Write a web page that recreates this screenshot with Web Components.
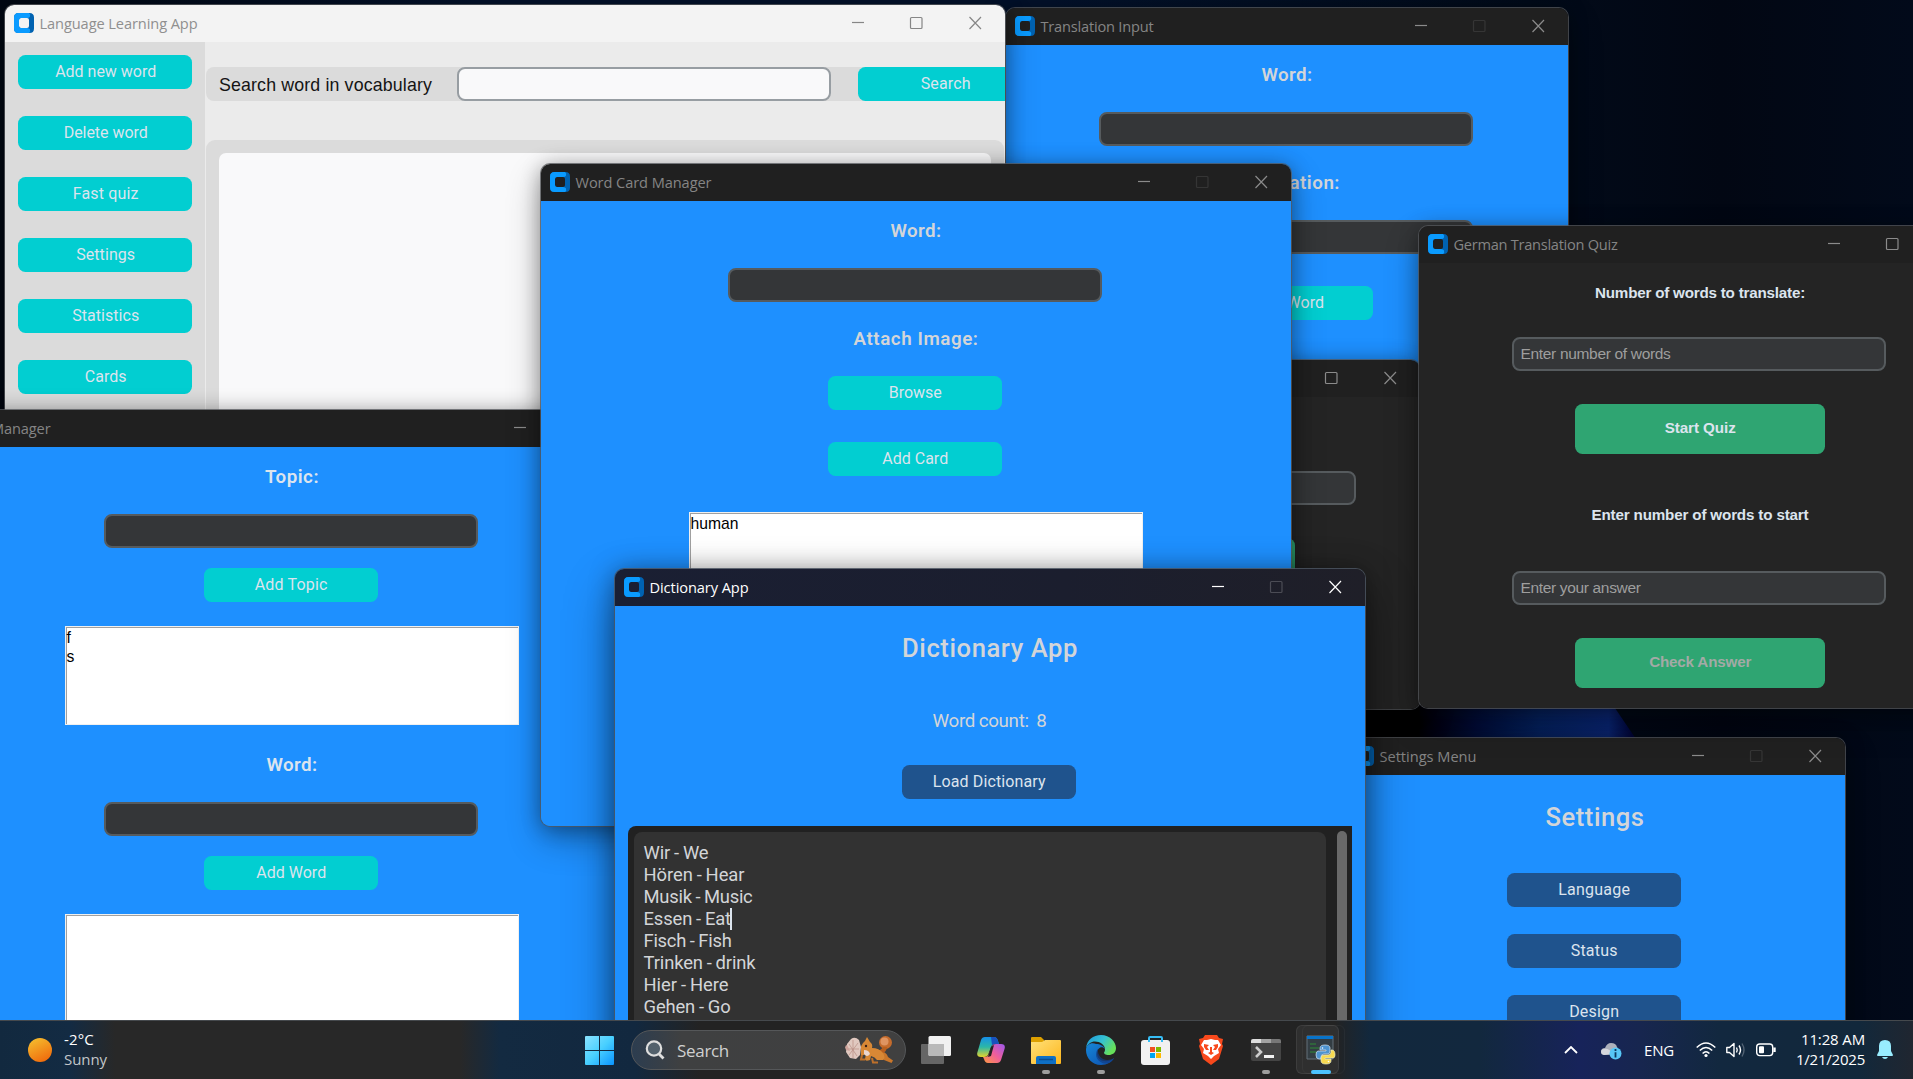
<!DOCTYPE html>
<html lang="en">
<head>
<meta charset="utf-8">
<title>Desktop</title>
<style>
html,body{margin:0;height:100%;overflow:hidden;background:#020814}
body{font-family:Roboto,"Liberation Sans",sans-serif}
</style>
</head>
<body>
<desk-top>
  <app-window caption="Translation Input" tw="112" nomax style="left:1006px;top:8px;width:562px;height:500px;--body:#1e90ff">
    <ui-label w="50" style="margin-top:18px">Word:</ui-label>
    <ui-entry style="margin-top:25px"></ui-entry>
    <ui-label w="105" style="margin-top:25px">Translation:</ui-label>
    <ui-entry style="margin-top:25px"></ui-entry>
    <ui-button style="margin-top:32px" w="75">Save Word</ui-button>
  </app-window>

  <app-window caption="" style="left:920px;top:360px;width:500px;height:349px;--body:#242424">
    <ui-entry style="margin-top:74px"></ui-entry>
    <ui-button big style="margin-top:33px"></ui-button>
  </app-window>

  <app-window caption="Settings Menu" tw="96" nomax style="left:1345px;top:738px;width:500px;height:400px;--body:#1e90ff">
    <ui-label head w="98" style="margin-top:26px">Settings</ui-label>
    <ui-button navy w="71" style="margin-top:40px">Language</ui-button>
    <ui-button navy w="46" style="margin-top:27px">Status</ui-button>
    <ui-button navy w="49" style="margin-top:27px">Design</ui-button>
  </app-window>

  <app-window caption="German Translation Quiz" tw="163" style="left:1419px;top:226px;width:562px;height:482px;--body:#242424">
    <ui-label arial w="209" style="margin-top:20px">Number of words to translate:</ui-label>
    <ui-entry w="149" style="margin-top:34px">Enter number of words</ui-entry>
    <ui-button big w="70" style="margin-top:33px">Start Quiz</ui-button>
    <ui-label arial w="216" style="margin-top:51px">Enter number of words to start</ui-label>
    <ui-entry w="119" style="margin-top:46px">Enter your answer</ui-entry>
    <ui-button big off w="101" style="margin-top:33px">Check Answer</ui-button>
  </app-window>

  <app-window caption="Language Learning App" tw="157" light style="left:5px;top:5px;width:1000px;height:600px;--body:#ebebeb">
    <vocabulary-view></vocabulary-view>
  </app-window>

  <app-window caption="Topic Manager" tw="98" style="left:-83px;top:410px;width:750px;height:660px;--body:#1e90ff">
    <ui-label bright w="53" style="margin-top:18px">Topic:</ui-label>
    <ui-entry style="margin-top:25px"></ui-entry>
    <ui-button w="72" style="margin-top:20px">Add Topic</ui-button>
    <list-box style="margin-top:24px;height:99px"><div>f</div><div>s</div></list-box>
    <ui-label bright w="50" style="margin-top:28px">Word:</ui-label>
    <ui-entry style="margin-top:25px"></ui-entry>
    <ui-button w="69" style="margin-top:20px">Add Word</ui-button>
    <list-box style="margin-top:24px;height:130px"></list-box>
  </app-window>

  <app-window caption="Word Card Manager" tw="135" nomax style="left:541px;top:164px;width:750px;height:662px;--body:#1e90ff">
    <ui-label w="50" style="margin-top:18px">Word:</ui-label>
    <ui-entry style="margin-top:25px"></ui-entry>
    <ui-label w="124" style="margin-top:25px">Attach Image:</ui-label>
    <ui-button w="52" style="margin-top:25px">Browse</ui-button>
    <ui-button w="65" style="margin-top:32px">Add Card</ui-button>
    <list-box style="margin-top:36px;height:99px"><div>human</div></list-box>
  </app-window>

  <app-window caption="Dictionary App" tw="98" nomax active style="left:615px;top:569px;width:750px;height:530px;--body:#1e90ff">
    <ui-label head w="175" style="margin-top:26px">Dictionary App</ui-label>
    <ui-label plain w="113" style="margin-top:45px">Word count:&nbsp; 8</ui-label>
    <ui-button navy w="112" style="margin-top:32px">Load Dictionary</ui-button>
    <text-panel style="margin-top:27px"></text-panel>
  </app-window>

  <task-bar></task-bar>
</desk-top>

<script>
const make = (tag, html, init) => customElements.define(tag, class extends HTMLElement {
  connectedCallback() {
    if (this.shadowRoot) return;
    const t = document.createElement('template');
    t.innerHTML = typeof html === 'function' ? html(this) : html;
    this.attachShadow({mode: 'open'}).append(t.content.cloneNode(true));
    if (init) init(this);
  }
});

make('desk-top', `<style>
:host{display:block;position:relative;width:100vw;height:100vh;overflow:hidden;
background:linear-gradient(90deg,#020813 0,#04122c 25%,#04122c 55%,#020b1a 80%,#020713 90%,#020a1a 100%)}
.bloom{position:absolute;left:1365px;top:690px;width:290px;height:60px;
background:linear-gradient(90deg,#000004 0 18%,#020d38 38%,#06225f 60%,#0b2673 84%,#03063a 92%);clip-path:polygon(0 0,82% 0,96% 100%,0 100%)}
</style><div class="bloom"></div><slot></slot>`);

make('app-logo', `<style>:host{display:block;width:20px;height:20px}svg{display:block}</style>
<svg width="20" height="20" viewBox="0 0 20 20"><path d="M4.500 0H15.500Q20 0 20 4.500V15.500Q20 20 15.500 20H4.500Q0 20 0 15.500V4.500Q0 0 4.500 0ZM7 5Q5 5 5 7V13Q5 15 7 15H13Q15 15 15 13V7Q15 5 13 5Z" fill="#0062b1" fill-rule="evenodd"/>
<path d="M4.500 0H15Q16.800 1 16 3.500Q15.500 5 13 5H7Q5 5 5 7V13Q5 15 7 15H13Q15.500 15 16 16.500Q16.800 19 15 20H4.500Q0 20 0 15.500V4.500Q0 0 4.500 0Z" fill="#0a9bff"/></svg>`);

make('app-window', h => `<style>
:host{position:absolute;display:flex;flex-direction:column;border-radius:9px;box-sizing:border-box;
box-shadow:0 0 0 1px rgba(85,88,92,.75),0 2px 20px rgba(0,0,0,.32),0 14px 34px rgba(0,0,0,.3);--bar:#202020;--ink:#858585;--btn:#8b8b8b}
:host([light]){--bar:#f3f3f3;--ink:#8f8f8f;--btn:#868686}
:host([active]){--bar:linear-gradient(90deg,#1a1f33,#1b1e2e 60%,#1f1f28);--ink:#fff;--btn:#fff;box-shadow:0 0 0 1px rgba(75,85,98,.85),0 2px 26px rgba(0,0,0,.4),0 22px 50px rgba(0,0,0,.42)}
.bar{height:37px;flex:none;display:flex;align-items:center;background:var(--bar);color:var(--ink);padding:0 0 1px 9px;box-sizing:border-box;border-radius:9px 9px 0 0}
fit-text{margin-left:5.500px;font:14.6px/34px "Open Sans","Noto Sans",sans-serif;padding-bottom:1px}
.ctl{margin-left:auto;display:flex;padding-right:1px}
.ctl svg{width:58px;height:37px;display:block;fill:none;stroke:var(--btn);stroke-width:1.2}
.ctl .dim{opacity:.2}
.body{flex:1;min-height:0;overflow:hidden;display:flex;flex-direction:column;align-items:center;background:var(--body);border-radius:0 0 9px 9px;box-sizing:border-box;padding-right:1px}
:host([light]) .body{display:block;padding:0}
</style>
<div class="bar"><app-logo></app-logo>${h.getAttribute('caption') ? `<fit-text w="${h.getAttribute('tw')}">${h.getAttribute('caption')}</fit-text>` : ''}
<div class="ctl"><svg viewBox="0 0 58 37"><path d="M22 17.500H34"/></svg>
<svg ${h.hasAttribute('nomax') ? 'class="dim"' : ''} viewBox="0 0 58 37"><rect x="22.500" y="12.500" width="11.500" height="11" rx="1"/></svg>
<svg viewBox="0 0 58 37"><path d="M23.500 12L35 24M35 12L23.500 24"/></svg></div></div>
<div class="body"><slot></slot></div>`);

make('ui-label', h => `<style>
:host{display:block;flex:none;height:24px;margin-left:1px;font:600 18.750px/25px Roboto,sans-serif;color:#d3d5d8}
:host([bright]){color:#dce4ee}
:host([head]){height:32px;font-size:25.600px;line-height:32px;font-weight:500;margin-left:1px}
:host([plain]){font-weight:400;line-height:24px;word-spacing:-.5px;margin-left:0}
:host([arial]){height:20px;font:700 15.200px/20px "Liberation Sans",sans-serif;color:#dce4ee}
</style><fit-text w="${h.getAttribute('w')}"><slot></slot></fit-text>`);

make('ui-entry', h => `<style>
:host{display:block;flex:none;box-sizing:border-box;width:374px;height:34px;border:2px solid #565b5e;border-radius:8px;background:#343638;
color:#9e9e9e;font:15.5px/29px "Liberation Sans",sans-serif;padding-left:7px;margin-right:2px}
:host([light]){background:#f9f9fa;border-color:#979da2;margin-right:0}
</style>${h.hasAttribute('w') ? `<fit-text w="${h.getAttribute('w')}"><slot></slot></fit-text>` : ''}`);

make('ui-button', h => `<style>
:host{display:flex;justify-content:center;flex:none;width:174px;height:34px;border-radius:7.500px;background:#02ced1;color:#dce4ee;font:16px/33px Roboto,sans-serif;margin-right:2px}
fit-text{position:relative;left:.7px}
:host([navy]){background:#1f538d}
:host([big]){width:250px;height:50px;margin-right:0;background:#2fa572;font:700 15.200px/48px "Liberation Sans",sans-serif}
:host([off]){color:#a3aaa6}
</style>${h.hasAttribute('w') ? `<fit-text w="${h.getAttribute('w')}"><slot></slot></fit-text>` : ''}`);

make('list-box', `<style>
:host{display:block;flex:none;width:454px;box-sizing:border-box;background:#fff;border:1px solid #f0f0f0;box-shadow:inset 1px 1px 0 #a0a0a0;
color:#000;font:15.700px/19px "Liberation Sans",sans-serif;padding:1px 1px}
</style><slot></slot>`);

make('vocabulary-view', `<style>
:host{display:flex;height:100%;overflow:hidden}
.side{width:200px;flex:none;background:#dbdbdb;display:flex;flex-direction:column;align-items:flex-start;gap:27px;padding:13px 0 0 13px;box-sizing:border-box}
.main{flex:1;min-width:0;padding:25px 0 0 1px;overflow:hidden}
.row{display:flex;align-items:center;width:860px;height:34px;background:#dbdbdb;border-radius:8px;padding-left:13px;box-sizing:border-box;color:#141414;font:17.800px/34px "Liberation Sans",sans-serif}
.row fit-text{padding-top:2px}
.row ui-entry{margin-left:25px}.row ui-button{margin-left:27px}
.panel{width:798px;height:440px;margin-top:39px;background:#dbdbdb;border-radius:9px;padding:13px;box-sizing:border-box}
.page{height:100%;border-radius:7px;background:#f9f9fa}
</style>
<div class="side"><ui-button w="100">Add new word</ui-button><ui-button w="83">Delete word</ui-button><ui-button w="65">Fast quiz</ui-button><ui-button w="58">Settings</ui-button><ui-button w="66">Statistics</ui-button><ui-button w="41">Cards</ui-button></div>
<div class="main"><div class="row"><fit-text w="212">Search word in vocabulary</fit-text><ui-entry light></ui-entry><ui-button w="49">Search</ui-button></div>
<div class="panel"><div class="page"></div></div></div>`);

make('text-panel', `<style>
:host{display:flex;flex:none;box-sizing:border-box;width:724px;height:300px;background:#212121;border-radius:8px 0 0 0;padding:6px 5px 0 6px}
.page{width:692px;flex:none;background:#323232;border-radius:8px;padding:10px 0 0 10px;box-sizing:border-box;color:#d3d5d8;font:18.400px/22px Roboto,sans-serif;word-spacing:-.6px}
.page div{display:flex;height:22px}
.caret{width:2px;height:22px;background:#dce4ee;margin-left:-1px}
.bar{width:10px;margin:-1px 0 0 auto;border-radius:5px;background:#696969}
</style><div class="page"><div><fit-text w="64">Wir - We</fit-text></div><div><fit-text w="100">Hören - Hear</fit-text></div><div><fit-text w="108">Musik - Music</fit-text></div><div><fit-text w="86.500">Essen - Eat</fit-text><span class="caret"></span></div><div><fit-text w="87">Fisch - Fish</fit-text></div><div><fit-text w="111">Trinken - drink</fit-text></div><div><fit-text w="84">Hier - Here</fit-text></div><div><fit-text w="86">Gehen - Go</fit-text></div></div><div class="bar"></div>`);

make('task-bar', `<style>
:host{position:absolute;left:0;right:0;bottom:0;height:59px;box-sizing:border-box;border-top:1px solid #45494d;display:flex;align-items:center;color:#fff;
font:15px/20px "Open Sans","Noto Sans",sans-serif;
background:linear-gradient(90deg,#12293f 0,#132b43 70px,#282828 115px,#282828 460px,#132a41 500px,#12283f 635px,#232323 700px,#232323 1335px,#12283d 1370px,#12283e 1480px,#17235a 1580px,#17264f 1640px,#12283f 1720px,#12283b 1860px,#202630 1913px)}
svg{display:block;flex:none}
.weather{display:flex;align-items:center;width:585px;flex:none;padding-left:28px;box-sizing:border-box;gap:12px}
.weather>div{padding-bottom:2px}
.weather span{color:#c3c6c9}
.search{margin-left:17px;width:275px;height:40px;flex:none;box-sizing:border-box;border-radius:20px;border:1px solid #555759;background:linear-gradient(90deg,#2c3d50,#3f4041 18%,#404040);display:flex;align-items:center;padding:0 12px 0 13px}
.search fit-text{margin-left:12px;padding-top:1px;color:#d0d0d0;font-size:17px}
.search .pet{margin-left:auto}
.apps{display:flex;margin-left:2px;align-self:stretch}
.app{width:55px;height:58px;flex:none;position:relative;display:flex;align-items:center;justify-content:center}
.run::after{content:"";position:absolute;left:24px;bottom:5px;width:8px;height:4px;border-radius:2px;background:#9d9d9d}
.on::before,.on i{content:"";position:absolute;left:3px;top:4px;width:43px;height:49px;border-radius:6px;background:rgba(255,255,255,.06);border:1px solid rgba(255,255,255,.07);box-sizing:border-box}
.on i{left:9px;width:43px;background:none;border-color:rgba(255,255,255,.04)}
.on::after{left:18px;width:20px;background:#4cc2ff}
.on svg{position:relative}
.tray{display:flex;align-items:center;margin-left:auto;padding-right:20px}
.clock{display:flex;flex-direction:column;align-items:flex-end;padding-bottom:2px}
</style>
<div class="weather"><svg width="24" height="24"><defs><linearGradient id="sun" x1=".2" y1="0" x2=".7" y2="1"><stop stop-color="#f5bd2e"/><stop offset="1" stop-color="#f06a0c"/></linearGradient></defs><circle cx="12" cy="12" r="12" fill="url(#sun)"/></svg>
<div><fit-text w="29">-2°C</fit-text><span><fit-text w="42">Sunny</fit-text></span></div></div>
<svg width="29" height="29"><defs><linearGradient id="st" x1="0" y1="0" x2="1" y2="1"><stop stop-color="#8be3ff"/><stop offset=".5" stop-color="#48cfff"/><stop offset="1" stop-color="#0a94ff"/></linearGradient></defs><path d="M0 1Q0 0 1 0H14V14H0ZM15 0H28Q29 0 29 1V14H15ZM0 15H14V29H1Q0 29 0 28ZM15 15H29V28Q29 29 28 29H15Z" fill="url(#st)"/></svg>
<div class="search"><svg width="20" height="20" fill="none" stroke="#dedede" stroke-width="2.200"><circle cx="9" cy="8.500" r="7.200" fill="#53616c"/><path d="M14 14L18.500 18.500" stroke-width="2.800"/></svg><fit-text w="51">Search</fit-text>
<svg class="pet" width="48" height="28" viewBox="0 0 48 28">
<path d="M31 15C37 14 42 17 43 21L48 24.500L46.500 27L39 24L33 20Z" fill="#c9762a"/><ellipse cx="40.500" cy="6.500" rx="6.500" ry="6.500" fill="#c46b2c"/><ellipse cx="39.500" cy="5.500" rx="4" ry="4" fill="#df9461"/><path d="M38 11Q36 14.500 32 14.500L36 18Q42 16 42 11Z" fill="#b95f1d"/>
<path d="M20 5L22 1L25 6Q28 8 27 12Q34 12 38 17Q41 22 38 24L32 24Q30 21 26 20L25 24Q20 26 20 23L21 18L16 20V15Q15 9 20 5Z" fill="#d88835"/><path d="M19 14Q24 14 25 18Q22 22 19 18Z" fill="#ead6cf"/><path d="M27 22L28 26.500H33M17 19L16 23.500H20" stroke="#bd702b" stroke-width="2" fill="none"/><circle cx="21" cy="10" r="1.200" fill="#3b2014"/>
<path d="M6 3Q10 0 14 4L16 11L15 19L11 23L5 22L1 16L2 8Z" fill="#e0c8bf"/><path d="M8 4L8 22M4 8L12 20M13 7L4 19M2 13H14" stroke="#b78c83" stroke-width=".7"/><path d="M2 9Q-1 10 1 14L5 15Z" fill="#cda29a"/></svg></div>
<div class="apps">
<div class="app"><svg width="30" height="28"><rect x="0" y="8" width="23" height="20" rx="1" fill="#666"/><rect x="7.500" y="0" width="22.500" height="20" rx="1.500" fill="#f1f1f1"/><path d="M7.500 8H23V20H9Q7.500 20 7.500 18.500Z" fill="#b9b9b9"/></svg></div>
<div class="app"><svg width="28" height="26" viewBox="0 0 28 26"><defs><linearGradient id="ca" x1="0" y1="0" x2="0" y2="1"><stop stop-color="#168fe8"/><stop offset=".5" stop-color="#2bb7a7"/><stop offset="1" stop-color="#e5d42c"/></linearGradient><linearGradient id="cb" x1="1" y1="0" x2="0" y2="1"><stop stop-color="#9c58ef"/><stop offset=".5" stop-color="#ef5e9b"/><stop offset="1" stop-color="#ff9a40"/></linearGradient></defs>
<path d="M8 0H17Q20 0 21 4L22 7H18Q15 7 14 10L11 18Q10 20 7 20H4Q-1 20 .5 15L4 3Q5 0 8 0Z" fill="url(#ca)"/><path d="M14 0H17Q20 0 21 4L22 7H18Q16 7 15 8Z" fill="#1951bd"/>
<path d="M20 26H11Q8 26 7 22L6 20H8Q11 20 12 17L15 9Q16 7 19 7H24Q29 7 27.500 12L24 23Q23 26 20 26Z" fill="url(#cb)"/><path d="M14 10L17 8L14 19L11 20Z" fill="#232323"/></svg></div>
<div class="app run"><svg width="30" height="28"><defs><linearGradient id="fo" x1="0" y1="0" x2="1" y2="1"><stop stop-color="#ffe17a"/><stop offset="1" stop-color="#fdb61c"/></linearGradient></defs><path d="M0 2Q0 1 1 1H10L13 4V8H0Z" fill="#dda000"/><path d="M0 6H11L14 4H29Q30 4 30 5V27Q30 28 29 28H1Q0 28 0 27Z" fill="url(#fo)"/><path d="M5 28V22Q5 20 7 20H23Q25 20 25 22V28Z" fill="#0f70c5"/><path d="M8 23.500H22" stroke="#0a4d91" stroke-width="1.500"/></svg></div>
<div class="app run"><svg width="30" height="30" viewBox="0 0 30 30"><defs><linearGradient id="ea" x1="0" y1="0" x2="1" y2=".5"><stop stop-color="#1c96dc"/><stop offset=".55" stop-color="#35c1d2"/><stop offset="1" stop-color="#67e05a"/></linearGradient><linearGradient id="eb" x1="0" y1="0" x2="1" y2="1"><stop stop-color="#1686d8"/><stop offset="1" stop-color="#0d4fae"/></linearGradient></defs>
<path d="M0 13C1 5 7 0 15 0C24 0 30 7 30 13C30 18 26 20 23 20C19 20 18 18.500 18 17.500C18.600 16.800 19 16 19 14.500C19 10 14 6.500 9 6.500C5 6.500 2 9 0 13Z" fill="url(#ea)"/>
<path d="M0 15C0 9 6 7 10 9C14 9 18 11 19 14C16 10 11 13 11 18C11 24 16 27 22 26C25 25.500 27 24 28 23C26 27 21 30 15 30C6 30 0 23 0 15Z" fill="url(#eb)"/><path d="M12 14C7 20 12 29 21 28.500C25 27.500 27 25 28 23C20 28 11 23 12 14Z" fill="#123f88" opacity=".75"/></svg></div>
<div class="app"><svg width="29" height="29"><rect y="4" width="29" height="25" rx="3" fill="#f1f1f1"/><path d="M8 6V2Q8 1 9 1H20Q21 1 21 2V6" fill="none" stroke="#36bdf5" stroke-width="2"/><path d="M9 11H14V16H9Z" fill="#f25022"/><path d="M15 11H20V16H15Z" fill="#7fba00"/><path d="M9 17H14V22H9Z" fill="#00a4ef"/><path d="M15 17H20V22H15Z" fill="#ffb900"/></svg></div>
<div class="app"><svg width="26" height="30" viewBox="0 0 26 30"><path d="M7 0H19L21 3L25 4L24 9L25 11L21 24L13 30L5 24L1 11L2 9L1 4L5 3Z" fill="#f8491c"/><path d="M13 4L17 5L20 5L23 10L20 14L21 18L16 21L13 24L10 21L5 18L6 14L3 10L6 5L9 5Z" fill="#fff"/><path d="M6 9L11 10L9 12L11 15L8 15L6 12ZM20 9L15 10L17 12L15 15L18 15L20 12ZM12 12H14L14 17L16 18L13 20L10 18L12 17Z" fill="#f8491c"/></svg></div>
<div class="app run"><svg width="30" height="24"><rect y="1" width="30" height="22" rx="2" fill="#444"/><path d="M0 5V3Q0 1 2 1H10V5Z" fill="#ddd"/><path d="M10 1H20V5H10Z" fill="#a3a3a3"/><path d="M20 1H28Q30 1 30 3V5H20Z" fill="#777"/><path d="M5 9L10 14L5 19" fill="none" stroke="#ccc" stroke-width="2.600"/><path d="M13 18.500H23" stroke="#f2f2f2" stroke-width="3"/></svg></div>
<div class="app run on"><i></i><svg width="30" height="30" viewBox="0 0 30 30"><path d="M1 1H27V24H1Z" fill="#333d43" stroke="#65717a"/><path d="M1 1H27V4H1Z" fill="#0873c9"/><path d="M4 9H10M4 13H13M4 17H10" stroke="#2e8c37"/>
<path d="M19 10Q14 10 14 13V15H20V16H12Q10 16 10 20Q10 24 13 24H15V22Q15 19 18 19H22Q24 19 24 16V13Q24 10 19 10Z" fill="#4d93cf" stroke="#d5e4ee" stroke-width=".7"/><path d="M20 29Q25 29 25 26V24H19V23H27Q29 23 29 20Q29 15 26 15H25V17Q25 20 22 20H18Q15 20 15 23V26Q15 29 20 29Z" fill="#f7d94f" stroke="#e8edcc" stroke-width=".7"/><circle cx="16.500" cy="13" r=".8" fill="#fff"/><circle cx="22.500" cy="26.500" r=".8" fill="#fff"/></svg></div>
</div>
<div class="tray">
<svg width="14" height="8" fill="none" stroke="#fff" stroke-width="1.800"><path d="M1 7L7 1L13 7"/></svg>
<svg style="margin-left:23px;margin-top:2px" width="21" height="18"><path d="M3 13Q0 13 0 10Q0 6 4 6Q6 1 10 1Q15 1 16 5Q18 7 17 12Z" fill="#acb0bb"/><path d="M3 7Q8 6 12 12L3 13Q0 12 0 10Q0 7 3 7Z" fill="#d5d7dd"/><circle cx="14.500" cy="11.500" r="6" fill="#57c7f6"/><path d="M14.500 7V9M14.500 10.200V15.500" stroke="#0d3b60" stroke-width="1.800"/></svg>
<fit-text style="margin-left:22px" w="29">ENG</fit-text>
<svg style="margin-left:22px" width="20" height="16" fill="none" stroke="#fff" stroke-width="1.500"><path d="M.7 5.500Q10-3.500 19.300 5.500M3.800 8.500Q10 2.500 16.200 8.500M6.600 11.500Q10 8 13.400 11.500"/><circle cx="10" cy="13.500" r="1.600" fill="#fff" stroke="none"/></svg>
<svg style="margin-left:10px" width="20" height="16" fill="none" stroke="#fff" stroke-width="1.400"><path d="M.8 5.500H3.500L8 1.500V14.500L3.500 10.500H.8Z" stroke-linejoin="round"/><path d="M10.500 5.500Q12 8 10.500 10.500M13 3.500Q16 8 13 12.500"/><path d="M16 1.500Q20 8 16 14.500" stroke="#526273"/></svg>
<svg style="margin-left:10px" width="20" height="14" fill="none" stroke="#fff" stroke-width="1.400"><rect x=".7" y="1" width="16" height="11.600" rx="3"/><path d="M18.500 4.500V9" stroke-width="2.400"/><rect x="3" y="3.300" width="5" height="7" rx="1" fill="#fff" stroke="none"/></svg>
<div class="clock" style="margin-left:20px"><fit-text w="63">11:28 AM</fit-text><fit-text w="68">1/21/2025</fit-text></div>
<svg style="margin-left:12px" width="16" height="20"><path d="M8 0Q14 0 14 6V11L16 15Q16 16 15 16H1Q0 16 0 15L2 11V6Q2 0 8 0Z" fill="#98ecfe"/><path d="M5 17H11Q10 19 8 19Q6 19 5 17Z" fill="#98ecfe"/></svg>
</div>`);

/* Single-line text whose tracking is tuned so that the run spans w pixels. */
make('fit-text', `<style>:host{display:block;width:max-content;white-space:nowrap}</style><span><slot></slot></span>`, el => {
  const slot = el.querySelector('slot');
  const text = (slot ? slot.assignedNodes().map(n => n.textContent).join('') : el.textContent).trim();
  const w = parseFloat(el.getAttribute('w')), span = el.shadowRoot.querySelector('span');
  const now = span.getBoundingClientRect().width;
  if (w && now && text.length > 1) span.style.letterSpacing = ((w - now + 1) / text.length).toFixed(3) + 'px';
});
</script>
</body>
</html>
